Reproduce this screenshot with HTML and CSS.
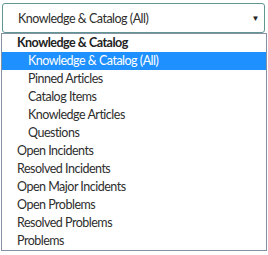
FILE: index.html
```html
<!DOCTYPE html>
<html lang="en">
<head>
    <meta charset="UTF-8">
    <title>Search Scope</title>
    <link rel="stylesheet" href="styles.css">
</head>
<body>

    <div class="picker">
        <div class="select-box">
            <span class="select-value">Knowledge &amp; Catalog (All)</span>
            <span class="arrow">&#9660;</span>
        </div>
        <ul class="options">
            <li class="group-label">Knowledge &amp; Catalog</li>
            <li class="option child selected">Knowledge &amp; Catalog (All)</li>
            <li class="option child">Pinned Articles</li>
            <li class="option child">Catalog Items</li>
            <li class="option child">Knowledge Articles</li>
            <li class="option child">Questions</li>
            <li class="option">Open Incidents</li>
            <li class="option">Resolved Incidents</li>
            <li class="option">Open Major Incidents</li>
            <li class="option">Open Problems</li>
            <li class="option">Resolved Problems</li>
            <li class="option">Problems</li>
        </ul>
    </div>

</body>
</html>
```

FILE: styles.css
```css
body {
    margin: 0;
    background-color: white;
    font-family: Lato, "Liberation Sans", sans-serif;
    font-size: 12.5px;
    letter-spacing: -0.5px;
    color: #2e2e2e;
}
.picker {
    width: 266px;
    padding-top: 3px;
    padding-left: 1px;
}
.select-box {
    display: flex;
    align-items: center;
    justify-content: space-between;
    height: 30px;
    margin-left: 1px;
    width: 263px;
    padding: 0 5px 0 15px;
    box-sizing: border-box;
    border: 1px solid #5f9692;
    border-radius: 3px;
}
.arrow {
    font-size: 8px;
    color: #222;
}
.options {
    list-style: none;
    margin: 0;
    padding: 0;
    width: 266px;
    box-sizing: border-box;
    border: 1px solid #8691a6;
}
.options li {
    height: 18px;
    line-height: 18px;
    padding-left: 15px;
    white-space: nowrap;
}
.group-label {
    font-weight: bold;
    color: #222;
}
.option.child {
    padding-left: 26px;
}
.option.selected {
    background-color: #1e90ff;
    color: white;
}
```
